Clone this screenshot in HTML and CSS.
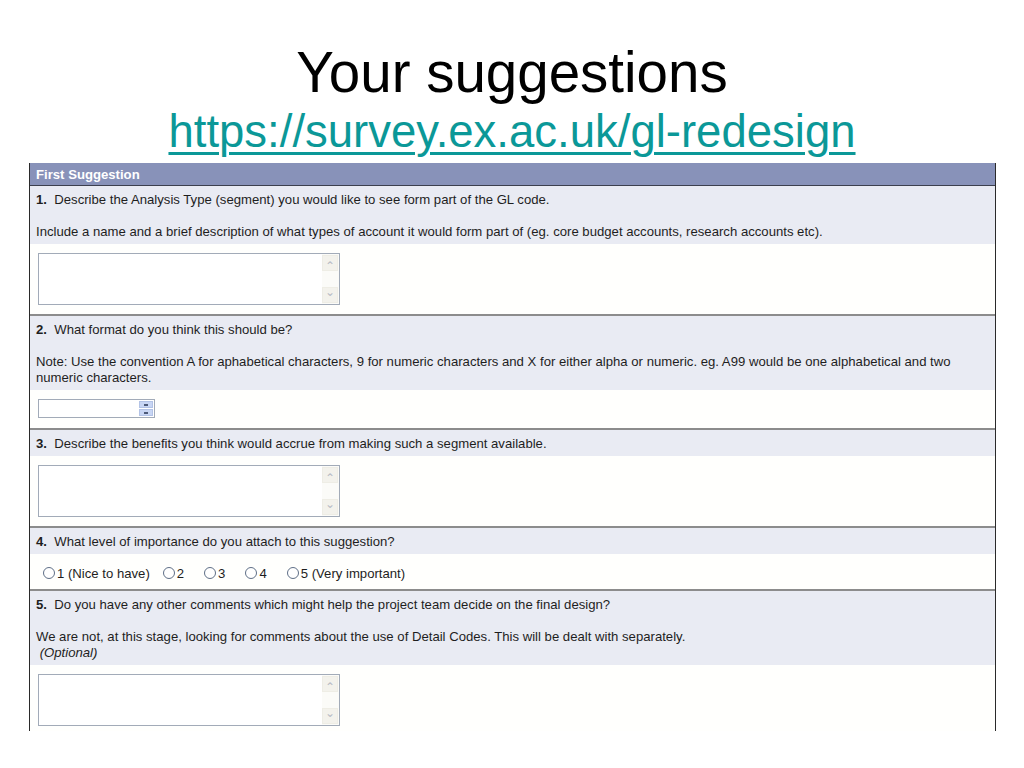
FILE: index.html
```html
<!DOCTYPE html>
<html lang="en">
<head>
  <meta charset="UTF-8">
  <title>Your suggestions</title>
  <link rel="stylesheet" href="styles.css">
</head>
<body>
  <div class="slide">
    <h1 class="title">Your suggestions</h1>
    <a class="link" href="#">https://survey.ex.ac.uk/gl-redesign</a>

    <div class="panel">
      <div class="panel-head">First Suggestion</div>

      <div class="question first">
        <p><b>1.</b>&nbsp; Describe the Analysis Type (segment) you would like to see form part of the GL code.</p>
        <p class="note">Include a name and a brief description of what types of account it would form part of (eg. core budget accounts, research accounts etc).</p>
      </div>
      <div class="answer">
        <div class="textbox">
          <div class="field"></div>
          <div class="scroll">
            <span class="sbtn">&#8963;</span>
            <span class="sbtn down">&#8964;</span>
          </div>
        </div>
      </div>

      <div class="question">
        <p><b>2.</b>&nbsp; What format do you think this should be?</p>
        <p class="note">Note: Use the convention A for aphabetical characters, 9 for numeric characters and X for either alpha or numeric. eg. A99 would be one alphabetical and two numeric characters.</p>
      </div>
      <div class="answer short">
        <div class="spinbox">
          <div class="field"></div>
          <div class="spin">
            <span class="sp"></span>
            <span class="sp"></span>
          </div>
        </div>
      </div>

      <div class="question">
        <p><b>3.</b>&nbsp; Describe the benefits you think would accrue from making such a segment available.</p>
      </div>
      <div class="answer">
        <div class="textbox">
          <div class="field"></div>
          <div class="scroll">
            <span class="sbtn">&#8963;</span>
            <span class="sbtn down">&#8964;</span>
          </div>
        </div>
      </div>

      <div class="question">
        <p><b>4.</b>&nbsp; What level of importance do you attach to this suggestion?</p>
      </div>
      <div class="answer radios">
        <label class="opt wide"><span class="radio"></span>1 (Nice to have)</label>
        <label class="opt"><span class="radio"></span>2</label>
        <label class="opt"><span class="radio"></span>3</label>
        <label class="opt"><span class="radio"></span>4</label>
        <label class="opt"><span class="radio"></span>5 (Very important)</label>
      </div>

      <div class="question">
        <p><b>5.</b>&nbsp; Do you have any other comments which might help the project team decide on the final design?</p>
        <p class="note">We are not, at this stage, looking for comments about the use of Detail Codes. This will be dealt with separately.<br>&nbsp;<i>(Optional)</i></p>
      </div>
      <div class="answer last">
        <div class="textbox">
          <div class="field"></div>
          <div class="scroll">
            <span class="sbtn">&#8963;</span>
            <span class="sbtn down">&#8964;</span>
          </div>
        </div>
      </div>
    </div>
  </div>
</body>
</html>
```

FILE: styles.css
```css
* {
  box-sizing: border-box;
}
body {
  margin: 0;
  background: #fff;
  font-family: "Liberation Sans", Arial, sans-serif;
}
.slide {
  width: 1024px;
  height: 768px;
  padding-top: 42px;
  text-align: center;
}
.title {
  margin: 0;
  font-size: 56.5px;
  line-height: 62px;
  font-weight: normal;
  color: #000;
}
.link {
  display: block;
  font-size: 45.5px;
  line-height: 56px;
  color: #0b9898;
  text-decoration: underline;
  text-decoration-thickness: 3px;
  text-underline-offset: 5px;
}
.panel {
  margin: 3px 0 0 29px;
  width: 967px;
  border-left: 1px solid #2a2a2a;
  border-right: 1px solid #2a2a2a;
  text-align: left;
  font-size: 13.15px;
  color: #1e1e1e;
}
.panel-head {
  height: 23px;
  padding: 4px 6px 0;
  background: #8892b9;
  border-bottom: 1px solid #3c3f4e;
  color: #fff;
  font-weight: bold;
}
.question {
  background: #e9ebf3;
  padding: 6px 6px 4px;
  border-top: 2px solid #8c8c8c;
}
.question.first {
  border-top: none;
}
.question p {
  margin: 0;
  line-height: 16px;
}
.question .note {
  margin-top: 16px;
}
.answer {
  background: #fffffd;
  padding: 9px 8px;
}
.answer.short {
  padding-bottom: 10px;
}
.answer.last {
  padding-bottom: 5px;
}
.textbox {
  display: flex;
  width: 302px;
  height: 52px;
  border: 1px solid #a2abb8;
  background: #fff;
}
.field {
  flex: 1;
}
.scroll {
  width: 17px;
  display: flex;
  flex-direction: column;
  justify-content: space-between;
  padding: 1px 1px 1px 0;
  background: #fbfbf8;
}
.sbtn {
  height: 16px;
  border: 1px solid #eeede5;
  background: #f3f2ec;
  color: #b9bdc6;
  font-size: 12px;
  line-height: 20px;
  text-align: center;
}
.sbtn.down {
  line-height: 8px;
}
.spinbox {
  display: flex;
  width: 117px;
  height: 19px;
  border: 1px solid #a2abb8;
  background: #fff;
}
.spin {
  width: 16px;
  display: flex;
  flex-direction: column;
  gap: 1px;
  padding: 1px;
}
.sp {
  flex: 1;
  background: #c8d6f4;
  border: 1px solid #b3c3e6;
  position: relative;
}
.sp::after {
  content: "";
  position: absolute;
  left: 4px;
  top: 2px;
  width: 4px;
  height: 2px;
  background: #4d5a78;
}
.radios {
  height: 35px;
  display: flex;
  align-items: center;
  padding: 3px 8px 0 13px;
}
.opt {
  display: flex;
  align-items: center;
  margin-right: 20px;
}
.opt.wide {
  margin-right: 13px;
}
.radio {
  width: 12px;
  height: 12px;
  margin-right: 2px;
  border: 1px solid #5f6f87;
  border-radius: 50%;
  background: #fff;
}
```
